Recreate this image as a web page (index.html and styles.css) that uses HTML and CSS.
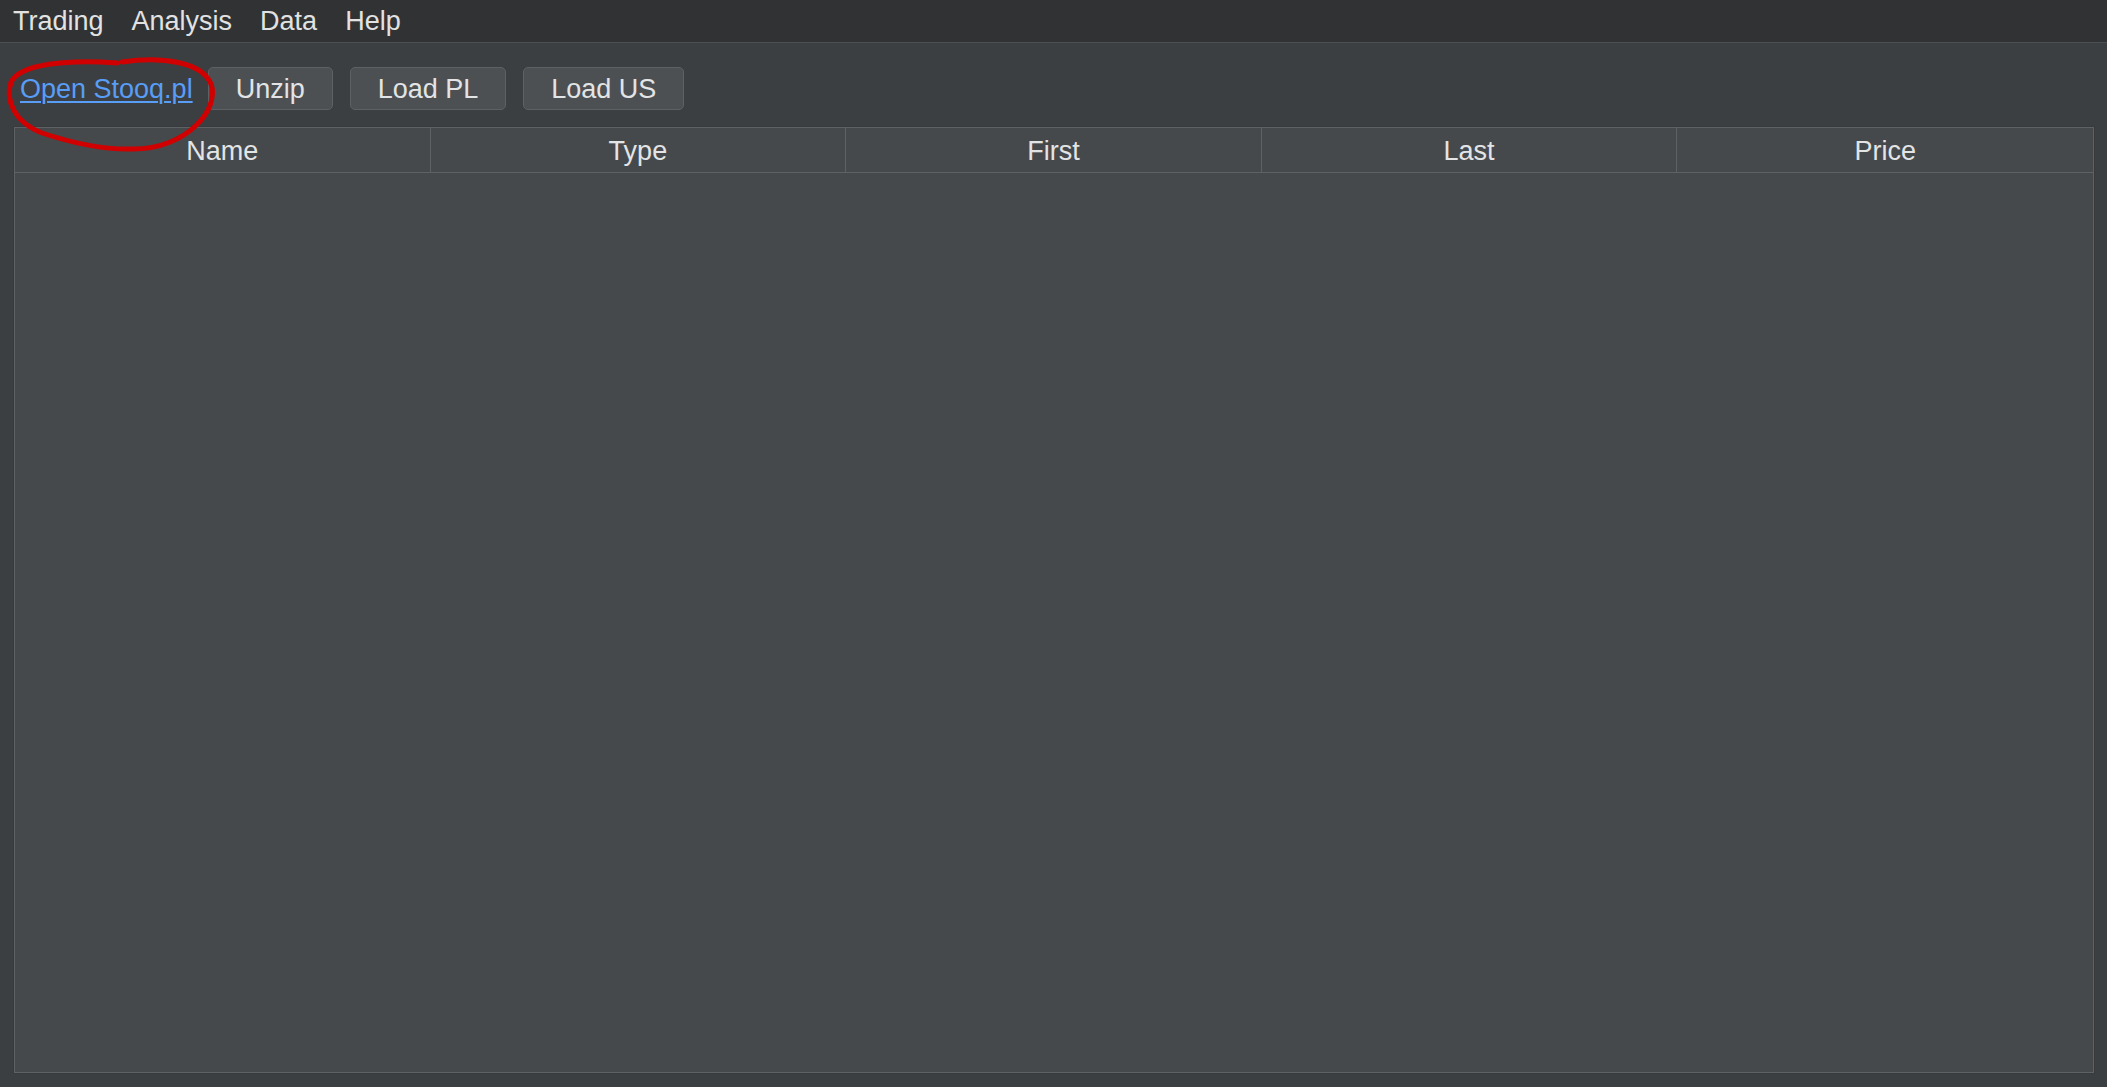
FILE: index.html
```html
<!DOCTYPE html>
<html>
<head>
<meta charset="utf-8">
<link rel="stylesheet" href="styles.css">
</head>
<body>
<div class="menubar">
  <span class="menu-item">Trading</span>
  <span class="menu-item">Analysis</span>
  <span class="menu-item">Data</span>
  <span class="menu-item">Help</span>
</div>
<div class="toolbar">
  <a class="link">Open Stooq.pl</a>
  <button class="btn">Unzip</button>
  <button class="btn">Load PL</button>
  <button class="btn">Load US</button>
</div>
<div class="table">
  <div class="thead">
    <div class="th">Name</div>
    <div class="th">Type</div>
    <div class="th">First</div>
    <div class="th">Last</div>
    <div class="th">Price</div>
  </div>
  <div class="tbody"></div>
</div>
<svg class="annotation" width="240" height="170" viewBox="0 0 240 170">
  <path d="M122,62 C162,56 202,62 211,84 C220,108 188,149 133,149 C100,150 66,141 42,133 C14,122 5,100 11,82 C20,64 68,59 117,63" fill="none" stroke="#d00000" stroke-width="5" stroke-linecap="round"/>
</svg>
</body>
</html>
```
FILE: styles.css
```css
html, body {
  margin: 0;
  padding: 0;
}
body {
  height: 100vh;
  display: flex;
  flex-direction: column;
  background: #3c3f41;
  font-family: "Liberation Sans", Arial, sans-serif;
  font-size: 27px;
  color: #dfe1e3;
  position: relative;
  overflow: hidden;
}
.menubar {
  height: 42px;
  flex: none;
  display: flex;
  align-items: center;
  background: #303234;
  border-bottom: 1px solid #4d5053;
}
.menu-item {
  padding: 0 14px;
  line-height: 42px;
  color: #e2e2e2;
}
.menu-item:first-child {
  padding-left: 13px;
}
.toolbar {
  flex: none;
  display: flex;
  align-items: center;
  padding: 24px 0 17px 20px;
  gap: 17px;
}
.link {
  color: #589df6;
  text-decoration: underline;
  text-underline-offset: 3px;
  text-decoration-thickness: 2px;
  margin-right: -2px;
  padding-top: 2px;
  cursor: pointer;
}
.btn {
  height: 43px;
  padding: 2px 27px 0;
  font-family: inherit;
  font-size: 27px;
  color: #e2e4e6;
  background: #4c5052;
  border: 1px solid #5e6163;
  border-radius: 5px;
}
.table {
  flex: 1;
  margin: 0 13px 14px 14px;
  border: 1px solid #5f6265;
  box-shadow: 0 0 0 1px #383a3c;
  background: #45494b;
  display: flex;
  flex-direction: column;
}
.thead {
  display: grid;
  grid-template-columns: repeat(5, 1fr);
  height: 44px;
  border-bottom: 1px solid #5f6265;
  background: #46494c;
}
.th {
  display: flex;
  align-items: center;
  justify-content: center;
  padding-top: 2px;
  border-right: 1px solid #5f6265;
  color: #e2e4e6;
}
.th:last-child {
  border-right: none;
}
.tbody {
  flex: 1;
}
.annotation {
  position: absolute;
  left: 0;
  top: 0;
  pointer-events: none;
}
```
